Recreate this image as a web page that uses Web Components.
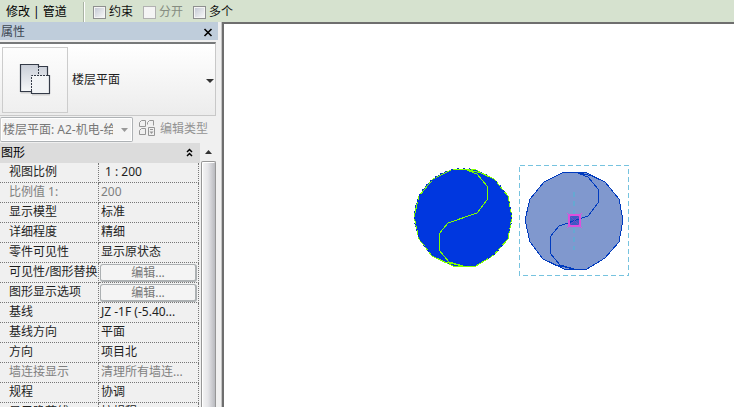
<!DOCTYPE html>
<html lang="zh-CN">
<head>
<meta charset="utf-8">
<title>属性</title>
<style>
html,body{height:100%;margin:0}
body{font:12px/16px "Noto Sans","Noto Sans CJK SC",sans-serif;color:#1e1e1e;overflow:hidden}
</style>
</head>
<body>
<app-window></app-window>
<script>
const define = (name, html, setup) => customElements.define(name, class extends HTMLElement {
  constructor() {
    super();
    const t = document.createElement('template');
    t.innerHTML = html;
    this.attachShadow({mode: 'open'}).append(t.content.cloneNode(true));
  }
  connectedCallback() { if (setup) setup(this, this.shadowRoot); }
});

define('option-check', `
<style>
:host{display:block}
label{display:flex;align-items:center;gap:3px;color:#111}
input{appearance:none;box-sizing:border-box;width:13px;height:13px;margin:0;border:1px solid #8e8f8f;background:linear-gradient(135deg,#c6cbd5,#f6f6f6) content-box,#f4f4f4;padding:1px;box-shadow:inset 0 0 0 1px #f4f4f4}
input:checked{background:#456}
input:disabled{border-color:#b1b1b1;background:#f4f4f4}
:host([disabled]) label{color:#858c80}
</style>
<label><input type="checkbox"><slot></slot></label>`,
(el, root) => { root.querySelector('input').disabled = el.hasAttribute('disabled'); });

define('options-bar', `
<style>
:host{display:flex;align-items:center;height:22px;box-sizing:border-box;padding:2px 0 0 6px;background:#d6e2cf;color:#000}
.title{width:78px;white-space:nowrap}
.options{display:flex;gap:10px;padding-left:8px;border-left:1px solid #fff;box-shadow:-1px 0 #a9b3a4;height:20px;align-items:center}
</style>
<span class="title">修改 | 管道</span>
<div class="options"><option-check>约束</option-check><option-check disabled>分开</option-check><option-check>多个</option-check></div>`);

define('palette-header', `
<style>
:host{display:flex;align-items:center;justify-content:space-between;height:18px;box-sizing:border-box;background:#bfcddb;color:#3c4652;padding:2px 5px 0 1px}
button{display:flex;padding:0;border:0;background:none}
</style>
<slot></slot>
<button aria-label="关闭"><svg width="10" height="9" viewBox="0 0 10 9"><path d="M1.500 1 8.500 8M8.500 1 1.500 8" stroke="#000" stroke-width="1.600"/></svg></button>`);

define('type-selector', `
<style>
:host{display:block;margin-top:2px;border-top:2px solid #77797a;border-right:1px solid #c8c8c8;border-bottom:1px solid #c8c8c8}
button{display:flex;align-items:center;width:100%;height:71px;box-sizing:border-box;padding:2px 1px 2px 2px;border:0;background:linear-gradient(#fff,#ececec);font:inherit;color:inherit;text-align:left}
.icon{display:flex;width:64px;height:64px;border:1px solid #ccc;background:linear-gradient(#fdfdfd,#efefef);margin-right:4px}
.name{flex:1;padding-top:1px}
.arrow{margin-top:2px}
</style>
<button aria-haspopup="listbox">
<span class="icon"><svg width="64" height="64" viewBox="0 0 64 64">
<defs><linearGradient id="g" x1="0" y1="0" x2="0" y2="1"><stop stop-color="#c9ced8"/><stop offset="1" stop-color="#fafbfc"/></linearGradient></defs>
<path d="M17.500 44.500H28M29 46.500H47" stroke="#d0d0d0" stroke-width="2"/>
<path d="M17.500 16.500H35.500V18.500H44.500V27.500H46.500V45.500H28.500V43.500H17.500Z" fill="url(#g)"/>
<path d="M28.500 27.500H46.500V45.500H28.500Z" fill="#f2f4f6"/>
<path d="M28.500 43.500H17.500V16.500H35.500V18.500H44.500V27.500H46.500V45.500H28.500V43" fill="none" stroke="#343b48" stroke-width="1.200"/>
<path d="M35.500 18V27M45 27.500H28.500V44" fill="none" stroke="#343b48" stroke-dasharray="2 1"/>
</svg></span>
<span class="name">楼层平面</span>
<svg class="arrow" width="8" height="4" viewBox="0 0 8 4"><path d="M0 0H8L4 4Z" fill="#333"/></svg>
</button>`);

define('view-filter', `
<style>
:host{display:flex;align-items:center;height:27px;color:#8b8b8b}
.combo{display:flex;align-items:center;position:relative;width:133px}
select{appearance:none;width:100%;height:25px;box-sizing:border-box;margin:0;border:1px solid #aeb2b5;border-left-color:#ccc;border-radius:2px;background:#f4f4f4;box-shadow:inset 0 0 0 1px #fff;font:inherit;color:#777;opacity:1;padding:0 19px 0 2px;overflow:hidden}
.combo svg{position:absolute;right:5px;top:11px}
button{display:flex;align-items:center;gap:5px;margin-left:6px;padding:0 0 2px;border:0;background:none;font:inherit;color:#939393}
</style>
<span class="combo"><select disabled aria-label="视图"><option>楼层平面: A2-机电-给排水</option></select><svg width="7" height="4" viewBox="0 0 7 4"><path d="M0 0H7L3.500 4Z" fill="#999"/></svg></span>
<button disabled><svg width="16" height="17" viewBox="0 0 16 17" fill="none" stroke="#969696"><path d="M.5 6.500V2.500L2.500.5H6.500V6.500ZM8.500 4.500V2.500L10.500.5H14.500V5.500M6.500 14.500H.5V10.500L2.500 8.500H6.500ZM9.500 7.500H15.500V15.500H9.500Z"/><path d="M11 9.500H14" /><path d="M10.500 11.500H14.500L12.500 14Z" fill="#969696" stroke="none"/></svg>编辑类型</button>`);

const rows = [
  ['视图比例', '1 : 200', 'indent'], ['比例值 1:', '200', 'dim'], ['显示模型', '标准'], ['详细程度', '精细'],
  ['零件可见性', '显示原状态'], ['可见性/图形替换', null], ['图形显示选项', null], ['基线', 'JZ -1F (-5.40...'],
  ['基线方向', '平面'], ['方向', '项目北'], ['墙连接显示', '清理所有墙连...', 'dim'], ['规程', '协调'], ['显示隐藏线', '按规程']
];
define('property-grid', `
<style>
:host{display:block;overflow:hidden}
h2{display:flex;align-items:center;justify-content:space-between;margin:0;height:20px;padding:0 7px 0 1px;background:#dcdcdc;font:inherit;color:#000;box-sizing:border-box}
h2 button{display:flex;padding:0 0 2px;border:0;background:none}
table{width:calc(100% - 1px);table-layout:fixed;border-collapse:separate;border-spacing:0}
.label{width:99px}
th,td{height:20px;box-sizing:border-box;padding:0 0 2px;font-weight:400;text-align:left;white-space:nowrap;border-right:1px dotted #777;border-bottom:1px dotted #777;overflow:hidden;line-height:16px}
th{padding-left:9px}
td{padding-left:2px}
.indent td{padding-left:6px}
.dim{color:#7f7f7f}
td.action{padding:0 1px}
td button{display:block;width:100%;height:18px;box-sizing:border-box;border:1px solid #acb0b2;border-width:1px 2px 2px 1px;border-radius:3px;background:#f4f4f4;color:#777;padding:1px 0 0;font:inherit;line-height:14px}
</style>
<h2>图形<button aria-label="折叠"><svg width="7" height="9" viewBox="0 0 7 9"><path d="M1 4 3.500 1.500 6 4M1 8 3.500 5.500 6 8" fill="none" stroke="#000" stroke-width="1.500"/></svg></button></h2>
<table><colgroup><col class="label"><col></colgroup><tbody></tbody></table>`,
(el, root) => {
  const body = root.querySelector('tbody');
  rows.forEach(([name, value, kind]) => {
    const tr = body.insertRow();
    if (kind) tr.className = kind;
    const th = document.createElement('th');
    th.scope = 'row';
    th.textContent = name;
    tr.append(th);
    const td = tr.insertCell();
    if (value === null) {
      td.className = 'action';
      const b = document.createElement('button');
      b.textContent = '编辑...';
      b.disabled = true;
      b.setAttribute('aria-label', name + ' 编辑...');
      td.append(b);
    } else td.textContent = value;
  });
});

define('scroll-rail', `
<style>
:host{display:flex;flex-direction:column;background:#f0f0f0}
.up{display:flex;align-items:center;justify-content:center;height:18px}
.thumb{flex:1;border:1px solid #979797;border-bottom:0;border-radius:2px 2px 0 0;background:linear-gradient(90deg,#f5f5f5,#e6e6e9 45%,#b9babf);box-shadow:inset 1px 1px #fff}
</style>
<div class="up"><svg width="7" height="4" viewBox="0 0 7 4"><path d="M0 4H7L3.500 0Z" fill="#333"/></svg></div><div class="thumb"></div>`);

define('property-palette', `
<style>
:host{display:flex;flex-direction:column;background:#f0f0f0;min-height:0}
.content{display:flex;flex-direction:column;flex:1;min-height:0;margin-right:2px}
.scroller{display:grid;grid-template-columns:1fr 15px;column-gap:1px;flex:1;min-height:0}
</style>
<palette-header>属性</palette-header>
<div class="content"><type-selector></type-selector><view-filter></view-filter>
<div class="scroller"><property-grid></property-grid><scroll-rail></scroll-rail></div></div>`);

define('drawing-canvas', `
<style>
:host{display:block;background:#fff;border-left:2px solid #6e6e6e;border-top:2px solid #6e6e6e;box-shadow:-1px 0 #c4c4c4;overflow:hidden}
svg{display:block;width:100%;height:100%}
</style>
<svg role="img" aria-label="管道截面" fill="none" shape-rendering="crispEdges">
<defs>
<path id="ring" d="M-10-48H11L31-38 45-21 49 0 45 22 31 38 13 49H-10L-31 39-44 22-49 0-44-21-30-38Z"/>
<path id="flow" d="M1-48 14-43 24-31V-17L14-4-15 6-24 17V33L-14 45 0 49"/>
</defs>
<g transform="translate(239 193)">
<circle r="48.500" fill="#0037df"/>
<use href="#ring" fill="#0037df" stroke="#80ff00"/>
<circle r="48.500" stroke="#0037c0" stroke-dasharray="2 4"/>
<path d="M1-48 18-44 31-38M0 49-18 45-31 39" stroke="#80ff00"/>
<use href="#flow" stroke="#80ff00"/>
</g>
<g transform="translate(350 196)">
<path d="M-54.500-54.500H54.500V55.500H-54.500Z" stroke="#76c3df" stroke-dasharray="5 3"/>
<use href="#ring" fill="#8098ce" stroke="#003bbf"/>
<path d="M1-48 18-44 31-38M0 49-18 45-31 39" stroke="#003bbf"/>
<path d="M0-28V30" stroke="#65a8d2" stroke-width="2" stroke-dasharray="5 4"/>
<rect x="-4" y="-4" width="9" height="9" fill="#3d5bc4"/>
<use href="#flow" stroke="#003bbf"/>
<path d="M-4-4 5 5M5-4-4 5" stroke="#7646c8"/>
<rect x="-5" y="-5" width="11" height="11" rx="2" stroke="#dc50dc" stroke-width="2"/>
<path d="M-7-7-4-4M8-7 5-4M-7 8-4 5M8 8 5 5" stroke="#dc50dc"/>
</g>
</svg>`);

define('app-window', `
<style>
:host{display:flex;flex-direction:column;height:100%;background:#f0f0f0}
main{display:grid;grid-template-columns:218px 1fr;column-gap:4px;flex:1;min-height:0}
</style>
<options-bar></options-bar>
<main><property-palette></property-palette><drawing-canvas></drawing-canvas></main>`);
</script>
</body>
</html>
